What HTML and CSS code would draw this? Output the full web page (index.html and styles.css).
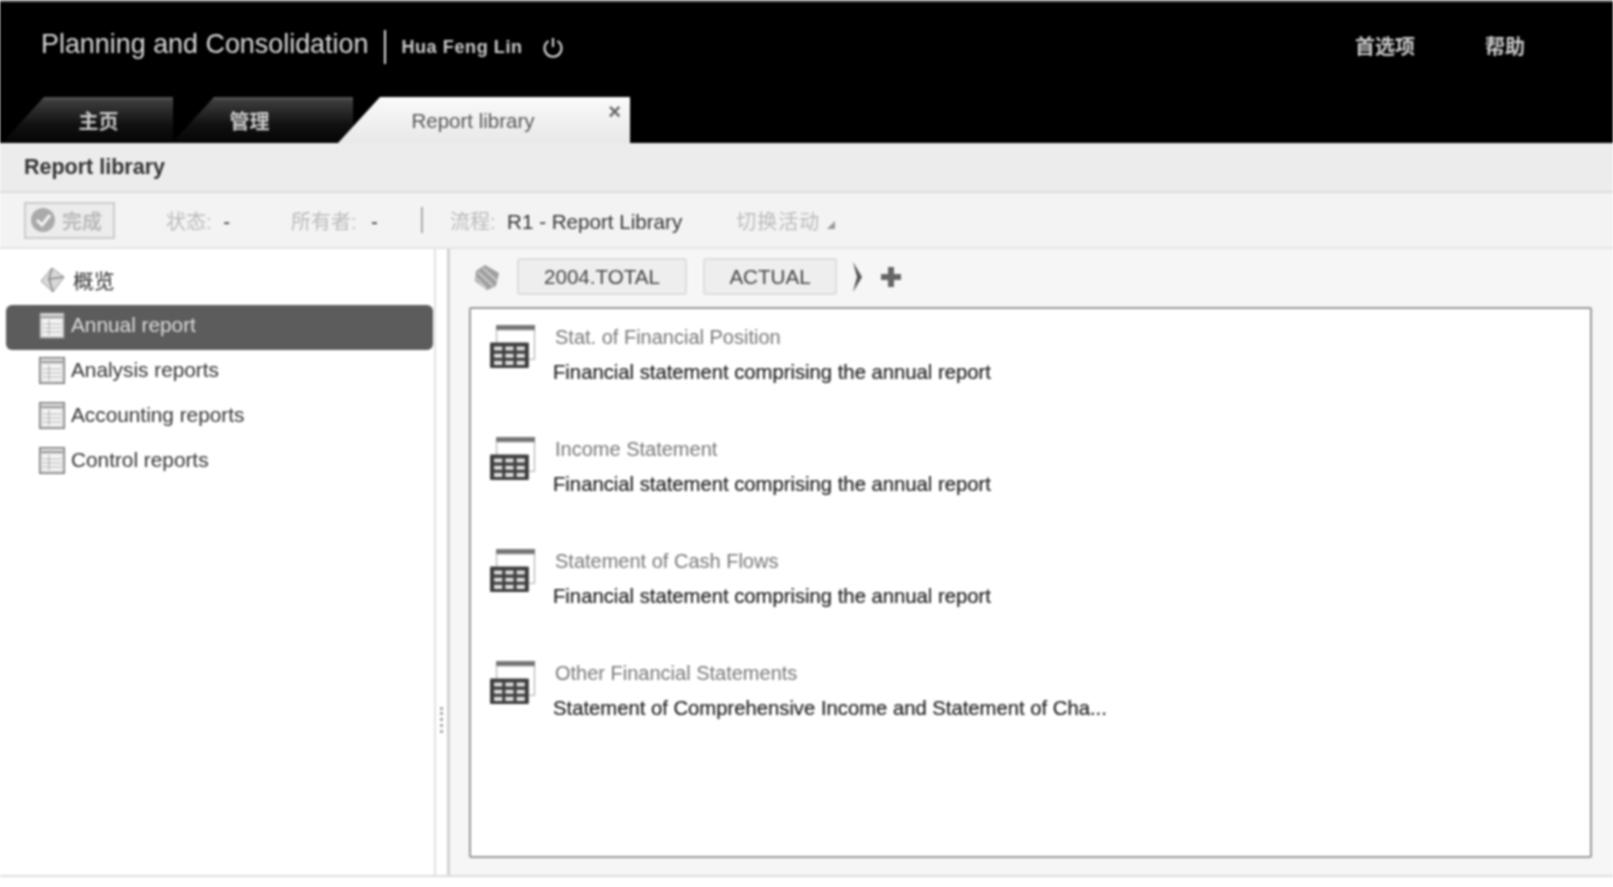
FILE: index.html
```html
<!DOCTYPE html>
<html lang="zh-CN">
<head>
    <meta charset="UTF-8">
    <title>Report library</title>
    <link rel="stylesheet" href="styles.css">
</head>
<body>
    <svg class="defs" width="0" height="0">
        <symbol id="folder-icon" viewBox="0 0 26 27">
            <rect x="0.75" y="0.75" width="24.5" height="25.5" fill="#e4e4e4" stroke="#777" stroke-width="1.5"/>
            <path d="M2 5h22" stroke="#999" stroke-width="2"/>
            <rect x="4" y="8" width="18" height="15" fill="#f8f8f8"/>
            <path d="M4 12h18M4 16h18M4 20h18M10 8v15" stroke="#aaa" stroke-width="1"/>
        </symbol>
        <symbol id="report-icon" viewBox="0 0 46 44">
            <rect x="7.5" y="1.5" width="37" height="33" fill="#fff" stroke="#aaa" stroke-width="1"/>
            <rect x="7" y="1" width="38" height="5" fill="#777"/>
            <rect x="1" y="18" width="38" height="25" fill="#3e3e3e" rx="1"/>
            <path d="M5 22h8v4H5zM16 22h8v4h-8zM27 22h8v4h-8zM5 29h8v4H5zM16 29h8v4h-8zM27 29h8v4h-8zM5 36h8v4H5zM16 36h8v4h-8zM27 36h8v4h-8z" fill="#ddd"/>
        </symbol>
    </svg>

    <div class="header">
        <div class="top-bar">
            <span class="app-title">Planning and Consolidation</span>
            <span class="title-sep"></span>
            <span class="user-name">Hua Feng Lin</span>
            <svg class="power-icon" width="22" height="22" viewBox="0 0 22 22" fill="none" stroke="#ddd" stroke-width="2">
                <path d="M6.5 5a8.5 8.5 0 1 0 9 0"/>
                <path d="M11 2v9"/>
            </svg>
            <div class="top-links">
                <span>首选项</span>
                <span>帮助</span>
            </div>
        </div>
        <div class="tabs">
            <div class="tab tab-home">主页</div>
            <div class="tab tab-manage">管理</div>
            <div class="tab tab-active">
                Report library
                <span class="tab-close">×</span>
            </div>
        </div>
    </div>

    <div class="page-title">Report library</div>

    <div class="toolbar">
        <div class="done-btn">
            <svg width="26" height="26" viewBox="0 0 26 26">
                <circle cx="13" cy="13" r="12" fill="#aaa"/>
                <path d="M7 13l5 5 8-10" fill="none" stroke="#f4f4f4" stroke-width="3"/>
            </svg>
            完成
        </div>
        <span class="tool-item tool-status">状态: <b>-</b></span>
        <span class="tool-item tool-owner">所有者: <b>-</b></span>
        <span class="tool-sep"></span>
        <span class="tool-item tool-flow">流程: <b>R1 - Report Library</b></span>
        <span class="tool-item tool-switch">切换活动 <i class="caret"></i></span>
    </div>

    <div class="main">
        <div class="sidebar">
            <div class="side-item">
                <svg class="side-icon" width="28" height="28" viewBox="0 0 28 28">
                    <path d="M13 2l12 9-11 15L2 15z" fill="#d8d8d8" stroke="#999"/>
                    <path d="M13 2l-3 11 15-2M10 13l4 13" fill="none" stroke="#888" stroke-width="1.5"/>
                </svg>
                概览
            </div>
            <div class="side-item selected">
                <svg class="side-icon" width="26" height="27"><use href="#folder-icon"/></svg>
                Annual report
            </div>
            <div class="side-item">
                <svg class="side-icon" width="26" height="27"><use href="#folder-icon"/></svg>
                Analysis reports
            </div>
            <div class="side-item">
                <svg class="side-icon" width="26" height="27"><use href="#folder-icon"/></svg>
                Accounting reports
            </div>
            <div class="side-item">
                <svg class="side-icon" width="26" height="27"><use href="#folder-icon"/></svg>
                Control reports
            </div>
        </div>

        <div class="splitter">
            <span class="grip"></span>
        </div>

        <div class="content">
            <div class="crumbs">
                <svg class="cube-icon" width="28" height="28" viewBox="0 0 28 28">
                    <path d="M12 2l14 8-3 13-9 4L2 18 3 8z" fill="#a0a0a0"/>
                    <path d="M5 9l15 14M10 5l14 13M3 15l10 10" stroke="#d8d8d8" stroke-width="1.5"/>
                </svg>
                <span class="crumb crumb-year">2004.TOTAL</span>
                <span class="crumb crumb-type">ACTUAL</span>
                <svg class="chevron" width="12" height="32" viewBox="0 0 12 32">
                    <path d="M1 1l9 15-9 15 4-15z" fill="#555"/>
                </svg>
                <svg class="plus" width="22" height="22" viewBox="0 0 22 22">
                    <path d="M8 1h6v7h7v6h-7v7H8v-7H1V8h7z" fill="#666"/>
                </svg>
            </div>

            <div class="report-list">
                <div class="report">
                    <svg class="report-icon" width="47" height="45"><use href="#report-icon"/></svg>
                    <div class="report-text">
                        <div class="report-name">Stat. of Financial Position</div>
                        <div class="report-desc">Financial statement comprising the annual report</div>
                    </div>
                </div>
                <div class="report">
                    <svg class="report-icon" width="47" height="45"><use href="#report-icon"/></svg>
                    <div class="report-text">
                        <div class="report-name">Income Statement</div>
                        <div class="report-desc">Financial statement comprising the annual report</div>
                    </div>
                </div>
                <div class="report">
                    <svg class="report-icon" width="47" height="45"><use href="#report-icon"/></svg>
                    <div class="report-text">
                        <div class="report-name">Statement of Cash Flows</div>
                        <div class="report-desc">Financial statement comprising the annual report</div>
                    </div>
                </div>
                <div class="report">
                    <svg class="report-icon" width="47" height="45"><use href="#report-icon"/></svg>
                    <div class="report-text">
                        <div class="report-name">Other Financial Statements</div>
                        <div class="report-desc">Statement of Comprehensive Income and Statement of Cha...</div>
                    </div>
                </div>
            </div>
        </div>
    </div>
</body>
</html>
```

FILE: styles.css
```css
* {
    margin: 0;
    padding: 0;
    box-sizing: border-box;
}

html {
    background: #fff;
}

body {
    font-family: "Liberation Sans", "Noto Sans CJK SC", sans-serif;
    width: 1613px;
    height: 877px;
    overflow: hidden;
    display: flex;
    flex-direction: column;
    background: #fff;
    color: #333;
    filter: blur(0.8px);
}

.defs {
    display: none;
}

/* header */
.header {
    height: 143px;
    background: #000;
    border-top: 2px solid #777;
    flex-shrink: 0;
    display: flex;
    flex-direction: column;
}

.top-bar {
    height: 95px;
    display: flex;
    align-items: center;
    padding: 0 88px 5px 41px;
    color: #ddd;
}

.app-title {
    font-size: 26.9px;
    margin-bottom: 6px;
    color: #d8d8d8;
}

.title-sep {
    width: 2px;
    height: 34px;
    background: #ddd;
    margin: 0 15px 0 16px;
}

.user-name {
    font-size: 18px;
    letter-spacing: 0.6px;
    margin-right: 19px;
    font-weight: 700;
    color: #ccc;
}

.top-links {
    margin-left: auto;
    margin-bottom: 4px;
    display: flex;
    gap: 70px;
    font-size: 20px;
    font-weight: 700;
    color: #ccc;
}

/* tabs */
.tabs {
    height: 46px;
    display: flex;
    align-items: stretch;
}

.tab {
    display: flex;
    align-items: center;
    justify-content: center;
    font-size: 20px;
    font-weight: 700;
    color: #ccc;
    background: linear-gradient(#555 0, #3a3a3a 5px, #111 60%, #050505 100%);
    clip-path: polygon(0 100%, 42px 0, 100% 0, 100% 100%);
}

.tab-home {
    width: 171px;
    margin-left: 2px;
    padding-left: 22px;
}

.tab-manage {
    width: 181px;
    margin-left: -1px;
    padding-right: 26px;
}

.tab-active {
    position: relative;
    width: 292px;
    margin-left: -15px;
    padding: 2px 22px 0 0;
    font-size: 20.5px;
    font-weight: 400;
    color: #555;
    background: linear-gradient(#fafafa, #e8e8e8);
}

.tab-close {
    position: absolute;
    top: 3px;
    right: 9px;
    font-size: 22px;
    font-weight: 700;
    color: #666;
    line-height: 24px;
}

/* title + toolbar */
.page-title {
    height: 50px;
    flex-shrink: 0;
    display: flex;
    align-items: center;
    padding-left: 24px;
    font-size: 21.5px;
    font-weight: 700;
    color: #333;
    background: #ececec;
    border-bottom: 2px solid #dcdcdc;
}

.toolbar {
    height: 56px;
    flex-shrink: 0;
    display: flex;
    align-items: center;
    padding-left: 24px;
    font-size: 20px;
    background: #f3f3f3;
    border-bottom: 2px solid #e4e4e4;
}

.done-btn {
    width: 91px;
    height: 37px;
    display: flex;
    align-items: center;
    gap: 6px;
    padding-left: 4px;
    color: #bbb;
    font-weight: 700;
    border: 2px solid #ccc;
    background: #ececec;
}

.tool-item {
    color: #bbb;
}

.tool-item b {
    color: #333;
    font-weight: 400;
    font-size: 20.6px;
    margin-left: 6px;
}

.tool-status {
    margin-left: 51px;
}

.tool-owner {
    margin-left: 61px;
}

.tool-owner b {
    margin-left: 9px;
}

.tool-sep {
    width: 2px;
    height: 26px;
    background: #aaa;
    margin: 0 27px 0 43px;
}

.tool-switch {
    margin-left: 54px;
    letter-spacing: 1px;
}

.caret {
    display: inline-block;
    width: 0;
    height: 0;
    border-left: 8px solid transparent;
    border-bottom: 8px solid #999;
}

/* main area */
.main {
    flex: 1;
    display: flex;
    min-height: 0;
    border-bottom: 2px solid #ddd;
}

.sidebar {
    width: 436px;
    flex-shrink: 0;
    padding: 11px 1px 0 6px;
    border-right: 2px solid #e2e2e2;
}

.side-item {
    height: 45px;
    display: flex;
    align-items: center;
    gap: 6px;
    padding: 0 0 5px 33px;
    font-size: 20.8px;
    color: #333;
}

.side-item.selected {
    background: #5c5c5c;
    border-radius: 6px;
    color: #ddd;
}

.side-icon {
    flex-shrink: 0;
}

.splitter {
    width: 14px;
    flex-shrink: 0;
    position: relative;
    background: #fff;
    border-right: 3px solid #d2d2d2;
}

.grip {
    position: absolute;
    top: 458px;
    left: 4px;
    height: 26px;
    border-left: 3px dotted #aaa;
}

.content {
    flex: 1;
    display: flex;
    flex-direction: column;
    background: #f6f6f6;
    padding: 0 21px 17px 19px;
}

.crumbs {
    height: 58px;
    flex-shrink: 0;
    display: flex;
    align-items: center;
    padding: 0 0 3px 4px;
}

.cube-icon {
    margin-right: 16px;
}

.crumb {
    height: 37px;
    display: flex;
    align-items: center;
    justify-content: center;
    font-size: 20.6px;
    color: #444;
    background: #eee;
    border: 2px solid #ddd;
    border-radius: 3px;
}

.crumb-year {
    width: 170px;
    margin-right: 16px;
}

.crumb-type {
    width: 134px;
    margin-right: 15px;
}

.chevron {
    margin-right: 16px;
}

.report-list {
    flex: 1;
    background: #fff;
    border: 2px solid #999;
    border-radius: 2px;
    padding: 15px 0 0 18px;
}

.report {
    height: 112px;
    display: flex;
    gap: 17px;
}

.report-icon {
    flex-shrink: 0;
}

.report-name {
    font-size: 20px;
    color: #777;
    line-height: 24px;
    padding-left: 2px;
    margin-top: 1px;
}

.report-desc {
    font-size: 20.25px;
    color: #222;
    -webkit-text-stroke: 0.2px #222;
    line-height: 24px;
    margin-top: 11px;
}
```
